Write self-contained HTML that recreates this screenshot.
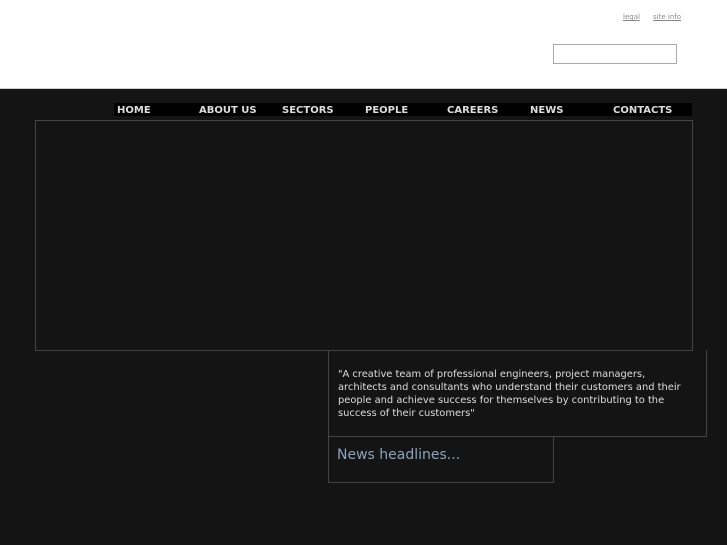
<!DOCTYPE html>
<html><head><style>
body{margin:0;width:727px;height:545px;background:#141414;font-family:"DejaVu Sans",sans-serif;position:relative;overflow:hidden}
.top{position:absolute;left:0;top:0;width:727px;height:88px;background:#fff;border-bottom:1px solid #ccc}
.links{position:absolute;top:13px;font-size:7px;color:#888;text-decoration:underline}
.search{position:absolute;left:553px;top:44px;width:122px;height:18px;border:1px solid #aaa;background:#fff}
.nav{position:absolute;left:114px;top:103px;width:578px;height:13px;background:#000}
.nav span{position:absolute;top:1px;font-size:10px;font-weight:bold;color:#ddd;line-height:13px}
.main{position:absolute;left:35px;top:120px;width:656px;height:229px;border:1px solid #444}
.quote{position:absolute;left:328px;top:350px;width:377px;height:86px;border:1px solid #444;border-top:none}
.quote p{margin:0;position:absolute;left:9px;top:18px;width:370px;white-space:nowrap;font-size:9.9px;line-height:13px;color:#ddd}
.news{position:absolute;left:328px;top:437px;width:224px;height:45px;border:1px solid #444;border-top:none}
.news p{margin:0;position:absolute;left:8px;top:10px;font-size:14px;color:#8aa3bd}
</style></head><body>
<div class="top"></div>
<span class="links" style="left:623px">legal</span>
<span class="links" style="left:653px">site info</span>
<div class="search"></div>
<div class="nav">
<span style="left:3px">HOME</span>
<span style="left:85px">ABOUT US</span>
<span style="left:168px">SECTORS</span>
<span style="left:251px">PEOPLE</span>
<span style="left:333px">CAREERS</span>
<span style="left:416px">NEWS</span>
<span style="left:499px">CONTACTS</span>
</div>
<div class="main"></div>
<div class="quote"><p>"A creative team of professional engineers, project managers,<br>architects and consultants who understand their customers and their<br>people and achieve success for themselves by contributing to the<br>success of their customers"</p></div>
<div class="news"><p>News headlines...</p></div>
</body></html>
